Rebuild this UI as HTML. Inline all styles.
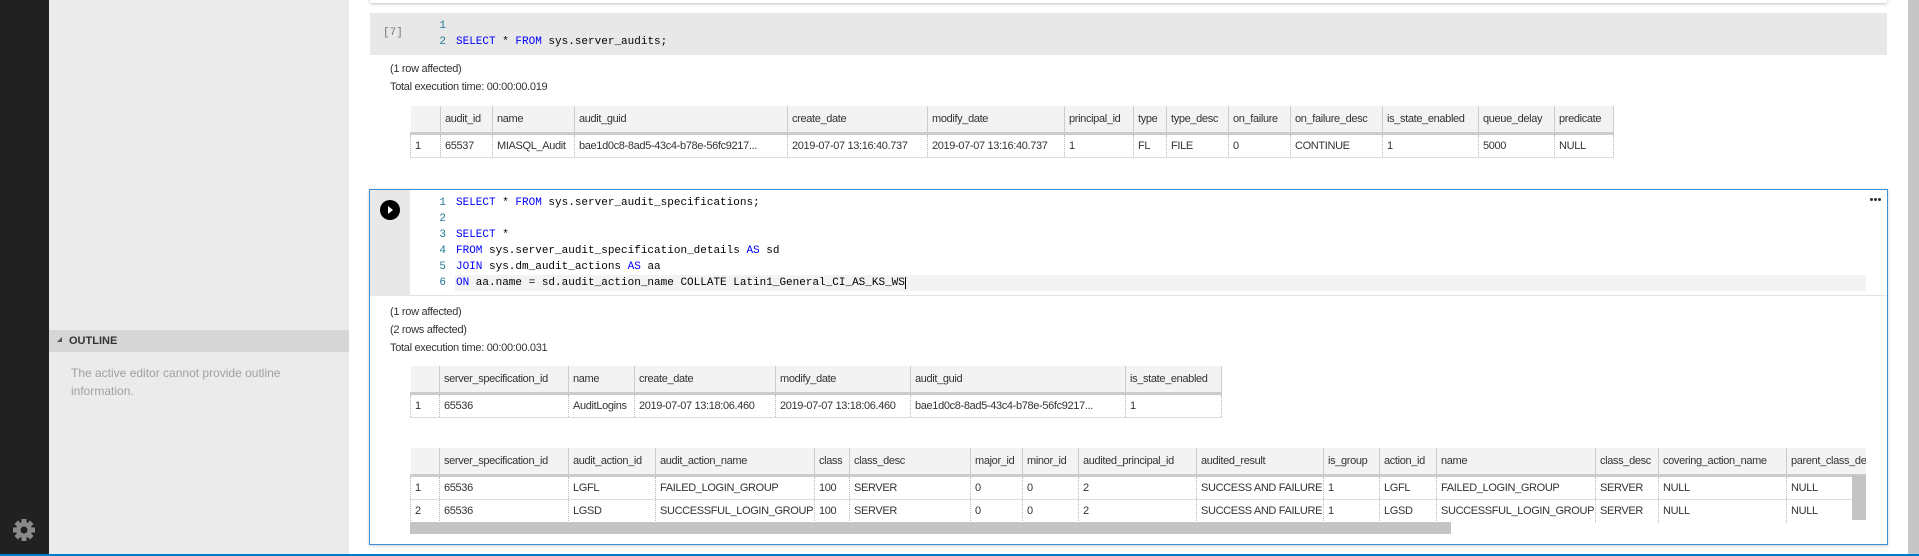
<!DOCTYPE html>
<html><head><meta charset="utf-8"><style>
*{margin:0;padding:0;box-sizing:border-box}
body{width:1919px;height:556px;position:relative;overflow:hidden;background:#fff;font-family:"Liberation Sans",sans-serif;font-size:11px;color:#333}
.abs{position:absolute}
.code{font-family:"Liberation Mono",monospace;font-size:11px;line-height:16px;white-space:pre;color:#000}
.k{color:#0000ff}
.ln{position:absolute;width:14px;text-align:right;color:#237893;font-family:"Liberation Mono",monospace;font-size:11px;line-height:16px}
table{border-collapse:collapse;table-layout:fixed;position:absolute;font-size:11px;color:#333;letter-spacing:-0.35px}
td,th{font-weight:normal;text-align:left;padding:0 2px 0 4px;white-space:nowrap;overflow:hidden;height:24px;border-right:1px dotted #bbb;border-bottom:1px solid #ddd}
th{background:#f3f3f3;height:27px;border-right:1px solid #ccc;border-bottom:3px solid #ccc}
td:first-child{border-left:1px dotted #bbb}
.t{letter-spacing:-0.3px}
.dot{position:absolute;width:3px;height:3px;border-radius:50%;background:#333;top:198px}
</style></head><body>
<div class="abs" style="left:0;top:0;width:49px;height:556px;background:#212121"></div>
<svg class="abs" style="left:12px;top:518px" width="24" height="24" viewBox="0 0 24 24"><g fill="#8a8a8a"><circle cx="12" cy="12" r="8"/><rect x="9.5" y="1" width="5" height="22"/><rect x="1" y="9.5" width="22" height="5"/><rect x="9.5" y="1" width="5" height="22" transform="rotate(45 12 12)"/><rect x="9.5" y="1" width="5" height="22" transform="rotate(-45 12 12)"/></g><circle cx="12" cy="12" r="3.5" fill="#212121"/></svg>
<div class="abs" style="left:49px;top:0;width:300px;height:556px;background:#ebebeb"></div>
<div class="abs" style="left:49px;top:330px;width:300px;height:22px;background:#d6d6d6"></div>
<div class="abs" style="left:57px;top:337px;width:0;height:0;border-left:5px solid transparent;border-bottom:5px solid #555"></div>
<div class="abs" style="left:69px;top:335px;font-weight:bold;font-size:11px;color:#333">OUTLINE</div>
<div class="abs" style="left:71px;top:364px;font-size:12px;color:#a0a0a0;line-height:18px;width:240px">The active editor cannot provide outline information.</div>

<div class="abs" style="left:370px;top:-10px;width:1517px;height:13px;background:#fff;box-shadow:0 1px 3px rgba(0,0,0,.25)"></div>
<div class="abs" style="left:370px;top:13px;width:1517px;height:42px;background:#e8e8e8"></div>
<div class="abs code" style="left:383px;top:25px;color:#777">[7]</div>
<div class="ln" style="left:432px;top:18px">1</div>
<div class="ln" style="left:432px;top:34px">2</div>
<div class="abs code" style="left:456px;top:34px"><span class="k">SELECT</span> * <span class="k">FROM</span> sys.server_audits;</div>
<div class="abs t" style="left:390px;top:63px">(1 row affected)</div>
<div class="abs t" style="left:390px;top:81px">Total execution time: 00:00:00.019</div>
<table style="left:410px;top:106px;width:1203px">
<colgroup><col style="width:30px"><col style="width:52px"><col style="width:82px"><col style="width:213px"><col style="width:140px"><col style="width:137px"><col style="width:69px"><col style="width:33px"><col style="width:62px"><col style="width:62px"><col style="width:92px"><col style="width:96px"><col style="width:76px"><col style="width:59px"></colgroup>
<tr><th></th><th>audit_id</th><th>name</th><th>audit_guid</th><th>create_date</th><th>modify_date</th><th>principal_id</th><th>type</th><th>type_desc</th><th>on_failure</th><th>on_failure_desc</th><th>is_state_enabled</th><th>queue_delay</th><th>predicate</th></tr>
<tr><td>1</td><td>65537</td><td>MIASQL_Audit</td><td>bae1d0c8-8ad5-43c4-b78e-56fc9217...</td><td>2019-07-07 13:16:40.737</td><td>2019-07-07 13:16:40.737</td><td>1</td><td>FL</td><td>FILE</td><td>0</td><td>CONTINUE</td><td>1</td><td>5000</td><td>NULL</td></tr>
</table>

<div class="abs" style="left:369px;top:189px;width:1519px;height:356px;border:1px solid #3d8fd6;box-shadow:0 1px 3px rgba(0,0,0,.2)"></div>
<div class="abs" style="left:370px;top:190px;width:40px;height:106px;background:#e8e8e8"></div>
<div class="abs" style="left:410px;top:295px;width:1477px;height:1px;background:#e3e3e3"></div>
<div class="abs" style="left:380px;top:200px;width:20px;height:20px;border-radius:50%;background:#000"></div>
<div class="abs" style="left:388px;top:206px;width:0;height:0;border-top:4px solid transparent;border-bottom:4px solid transparent;border-left:5px solid #fff"></div>
<div class="dot" style="left:1870px"></div><div class="dot" style="left:1874px"></div><div class="dot" style="left:1878px"></div>
<div class="abs" style="left:455px;top:275px;width:1411px;height:16px;background:#f3f3f3"></div>
<div class="ln" style="left:432px;top:195px">1</div>
<div class="ln" style="left:432px;top:211px">2</div>
<div class="ln" style="left:432px;top:227px">3</div>
<div class="ln" style="left:432px;top:243px">4</div>
<div class="ln" style="left:432px;top:259px">5</div>
<div class="ln" style="left:432px;top:275px">6</div>
<div class="abs code" style="left:456px;top:195px"><span class="k">SELECT</span> * <span class="k">FROM</span> sys.server_audit_specifications;

<span class="k">SELECT</span> *
<span class="k">FROM</span> sys.server_audit_specification_details <span class="k">AS</span> sd
<span class="k">JOIN</span> sys.dm_audit_actions <span class="k">AS</span> aa
<span class="k">ON</span> aa.name = sd.audit_action_name COLLATE Latin1_General_CI_AS_KS_WS<span style="border-left:1px solid #000"></span></div>
<div class="abs t" style="left:390px;top:306px">(1 row affected)</div>
<div class="abs t" style="left:390px;top:324px">(2 rows affected)</div>
<div class="abs t" style="left:390px;top:342px">Total execution time: 00:00:00.031</div>
<table style="left:410px;top:366px;width:811px">
<colgroup><col style="width:29px"><col style="width:129px"><col style="width:66px"><col style="width:141px"><col style="width:135px"><col style="width:215px"><col style="width:96px"></colgroup>
<tr><th></th><th>server_specification_id</th><th>name</th><th>create_date</th><th>modify_date</th><th>audit_guid</th><th>is_state_enabled</th></tr>
<tr><td>1</td><td>65536</td><td>AuditLogins</td><td>2019-07-07 13:18:06.460</td><td>2019-07-07 13:18:06.460</td><td>bae1d0c8-8ad5-43c4-b78e-56fc9217...</td><td>1</td></tr>
</table>
<div class="abs" style="left:410px;top:448px;width:1456px;height:75px;overflow:hidden">
<table style="left:0;top:0;width:1500px">
<colgroup><col style="width:29px"><col style="width:129px"><col style="width:87px"><col style="width:159px"><col style="width:35px"><col style="width:121px"><col style="width:52px"><col style="width:56px"><col style="width:118px"><col style="width:127px"><col style="width:56px"><col style="width:57px"><col style="width:159px"><col style="width:63px"><col style="width:128px"><col style="width:124px"></colgroup>
<tr><th></th><th>server_specification_id</th><th>audit_action_id</th><th>audit_action_name</th><th>class</th><th>class_desc</th><th>major_id</th><th>minor_id</th><th>audited_principal_id</th><th>audited_result</th><th>is_group</th><th>action_id</th><th>name</th><th>class_desc</th><th>covering_action_name</th><th>parent_class_desc</th></tr>
<tr><td>1</td><td>65536</td><td>LGFL</td><td>FAILED_LOGIN_GROUP</td><td>100</td><td>SERVER</td><td>0</td><td>0</td><td>2</td><td>SUCCESS AND FAILURE</td><td>1</td><td>LGFL</td><td>FAILED_LOGIN_GROUP</td><td>SERVER</td><td>NULL</td><td>NULL</td></tr>
<tr><td>2</td><td>65536</td><td>LGSD</td><td>SUCCESSFUL_LOGIN_GROUP</td><td>100</td><td>SERVER</td><td>0</td><td>0</td><td>2</td><td>SUCCESS AND FAILURE</td><td>1</td><td>LGSD</td><td>SUCCESSFUL_LOGIN_GROUP</td><td>SERVER</td><td>NULL</td><td>NULL</td></tr>
</table></div>
<div class="abs" style="left:1852px;top:475px;width:14px;height:45px;background:#c4c4c4"></div>
<div class="abs" style="left:410px;top:522px;width:1041px;height:12px;background:#c4c4c4"></div>

<div class="abs" style="left:1908px;top:0;width:11px;height:556px;background:#c6c6c6"></div>
<div class="abs" style="left:0;top:554px;width:1919px;height:2px;background:#007acc"></div>
</body></html>
